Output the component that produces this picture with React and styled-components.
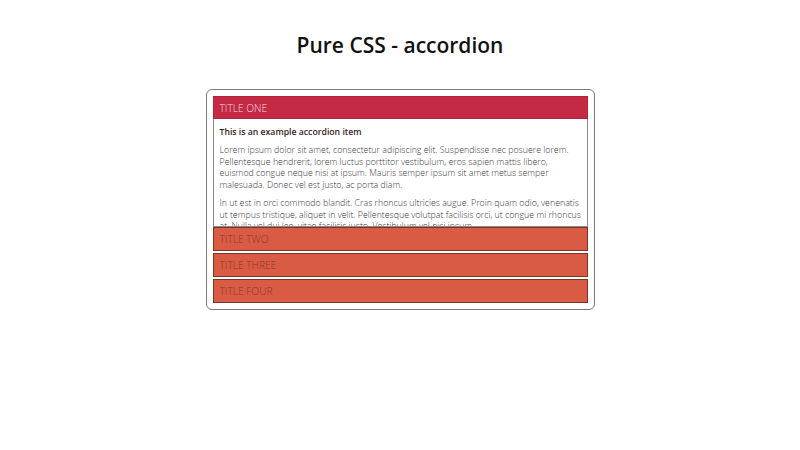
import React from 'react';
import styled, { createGlobalStyle } from 'styled-components';

const GlobalStyle = createGlobalStyle`
  body {
    margin: 0;
    background: #ffffff;
    font-family: "Open Sans", "Noto Sans", sans-serif;
  }
`;

const Page = styled.div`
  width: 800px;
  height: 450px;
  display: flex;
  flex-direction: column;
  align-items: center;
`;

const Heading = styled.h1`
  margin: 31px 0 0;
  font-size: 21px;
  font-weight: 600;
  color: #111;
  line-height: 28px;
`;

const Accordion = styled.div`
  margin-top: 30px;
  width: 375px;
  padding: 6px;
  border: 1px solid #7a7a7a;
  border-radius: 6px;
  display: flex;
  flex-direction: column;
  gap: 2px;
`;

const Item = styled.section`
  display: flex;
  flex-direction: column;
`;

const Header = styled.div`
  height: ${p => (p.$open ? '23px' : '24px')};
  box-sizing: border-box;
  padding: 0 6px;
  display: flex;
  align-items: center;
  font-size: 10.2px;
  font-weight: 300;
  text-transform: uppercase;
  background: ${p => (p.$open ? '#c42a44' : '#d95b43')};
  color: ${p => (p.$open ? '#f6dbe0' : '#8a3a2c')};
  border: 1px solid ${p => (p.$open ? '#b2253c' : '#7a3528')};
  position: relative;
  z-index: 1;
`;

const Content = styled.div`
  height: 108px;
  box-sizing: border-box;
  padding: 6px 3px 0 6px;
  border: 1px solid #8a8a8a;
  border-top: none;
  background: #fff;
  overflow: hidden;
  position: relative;
  margin-bottom: -2px;

  h2 {
    margin: 0 0 6px;
    font-size: 8.7px;
    font-weight: 600;
    color: #3a1a22;
    line-height: 14px;
  }

  p {
    margin: 0 0 6px;
    font-size: 8.8px;
    font-weight: 300;
    color: #3a3a3a;
    line-height: 11.7px;
  }
`;

const items = ['Title One', 'Title Two', 'Title Three', 'Title Four'];

export default function App() {
  return (
    <Page>
      <GlobalStyle />
      <Heading>Pure CSS - accordion</Heading>
      <Accordion>
        {items.map((t, i) => (
          <Item key={t}>
            <Header $open={i === 0}>{t}</Header>
            {i === 0 && (
              <Content>
                <h2>This is an example accordion item</h2>
                <p>
                  Lorem ipsum dolor sit amet, consectetur adipiscing elit. Suspendisse nec posuere lorem.
                  Pellentesque hendrerit, lorem luctus porttitor vestibulum, eros sapien mattis libero,
                  euismod congue neque nisi at ipsum. Mauris semper ipsum sit amet metus semper
                  malesuada. Donec vel est justo, ac porta diam.
                </p>
                <p>
                  In ut est in orci commodo blandit. Cras rhoncus ultricies augue. Proin quam odio, venenatis
                  ut tempus tristique, aliquet in velit. Pellentesque volutpat facilisis orci, ut congue mi rhoncus
                  at. Nulla vel dui leo, vitae facilisis justo. Vestibulum vel nisi ipsum.
                </p>
              </Content>
            )}
          </Item>
        ))}
      </Accordion>
    </Page>
  );
}
